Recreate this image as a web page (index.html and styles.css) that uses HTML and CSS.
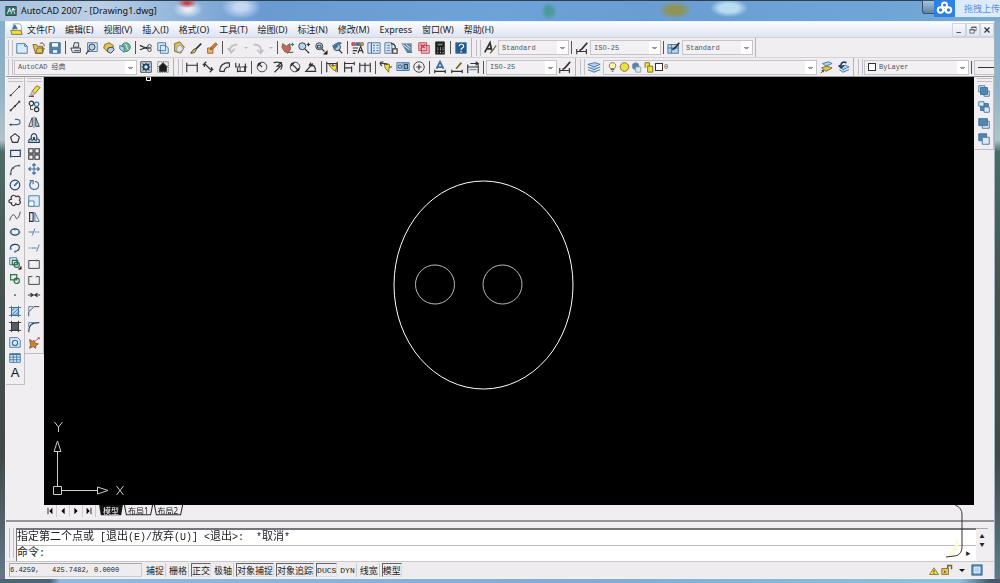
FILE: index.html
```html
<!DOCTYPE html>
<html lang="zh-CN">
<head>
<meta charset="utf-8">
<title>AutoCAD 2007 - [Drawing1.dwg]</title>
<link rel="stylesheet" href="styles.css">
</head>
<body>
<div class="window">
  <header class="titlebar">
    <svg class="ic" viewBox="0 0 16 16"><path class="f-teal" d="M1 2h14v12H1z"/><path class="s-white" d="M3 12l3-8 2 5M8 12l3-8 2 8M4 8h4M9 6h5"/></svg>
    <h1>AutoCAD 2007 - [Drawing1.dwg]</h1>
    <div class="glow"></div>
    <div class="upload">
      <button class="minimize" aria-label="最小化"></button>
      <svg class="cloud" viewBox="0 0 21 17"><circle cx="10.500" cy="5" r="2.500"/><circle cx="6.500" cy="10" r="2.700"/><circle cx="14.500" cy="10" r="2.700"/><path d="M8.500 8l4 4"/></svg>
      <a href="#">拖拽上传</a>
    </div>
  </header>
  <div class="client">
    <nav class="menubar">
      <svg class="ic" viewBox="0 0 16 16"><path class="f-white s-gray" d="M4 1h8l2 3v9H4z"/><path class="f-yellow s-brown" d="M1 9h12l2 5H2z"/><path class="f-blue s-blue" d="M3 7l3-5 3 5z"/></svg>
      <a href="#">文件(F)</a><a href="#">编辑(E)</a><a href="#">视图(V)</a><a href="#">插入(I)</a><a href="#">格式(O)</a><a href="#">工具(T)</a><a href="#">绘图(D)</a><a href="#">标注(N)</a><a href="#">修改(M)</a><a href="#">Express</a><a href="#">窗口(W)</a><a href="#">帮助(H)</a>
      <div class="mdi">
        <button aria-label="最小化文档"><svg class="ic" viewBox="0 0 16 16"><path class="bold" d="M4 12h7"/></svg></button>
        <button aria-label="还原文档"><svg class="ic" viewBox="0 0 16 16"><path d="M3 7h7v6H3zM3 8h7M6 6V3h7v6h-3M6 4h7"/></svg></button>
        <button aria-label="关闭文档"><svg class="ic" viewBox="0 0 16 16"><path class="heavy" d="M4 4l8 8M12 4l-8 8"/></svg></button>
      </div>
    </nav>

    <div class="toolrow">
      <div class="toolbar">
        <span class="grip"></span>
        <div class="group g3">
          <button aria-label="新建"><svg class="ic" viewBox="0 0 16 16"><path class="f-pale s-blue" d="M2 3h9l3 3v8H2zM11 3v3h3"/></svg></button>
          <button aria-label="打开"><svg class="ic" viewBox="0 0 16 16"><path class="f-gold s-brown" d="M1 4h4l1 2h6v8H4zM4 14l2-6h8l-2 6z"/><path d="M9 3c3-2 5 0 5 3"/></svg></button>
          <button aria-label="保存"><svg class="ic" viewBox="0 0 16 16"><path class="f-steel s-blue" d="M2 2h12v12H2z"/><path class="f-white s-blue" d="M4 2h8v5H4zM5 10h6v4H5z"/></svg></button>
        </div>
        <span class="sep"></span>
        <div class="group g4">
          <button aria-label="打印"><svg class="ic" viewBox="0 0 16 16"><path class="f-pale" d="M5 7l1-5h5v5zM2 8h11v5H4zM6 11h6"/></svg></button>
          <button aria-label="打印预览"><svg class="ic" viewBox="0 0 16 16"><path class="f-pale s-blue" d="M3 2h11v10H3z"/><circle class="f-sky" cx="8" cy="7" r="3.500"/><path class="bold" d="M5 10l-4 5"/></svg></button>
          <button aria-label="发布"><svg class="ic" viewBox="0 0 16 16"><path class="f-gold s-brown" d="M3 4l5-2 5 3-1 6-6 1-4-4z"/><path class="f-sky" d="M7 8l5-1 2 3-4 4-4-2z"/></svg></button>
          <button aria-label="三维 DWF"><svg class="ic" viewBox="0 0 16 16"><circle class="f-green s-teal" cx="9" cy="7" r="5"/><path class="f-sky s-blue" d="M2 5l5 2v6l-5-4z"/><path class="s-white" d="M8 3c3 2 1 5 4 7"/></svg></button>
        </div>
        <span class="sep"></span>
        <div class="group g5">
          <button aria-label="剪切"><svg class="ic" viewBox="0 0 16 16"><path class="bold" d="M1 5l9 4M1 10l9-3"/><circle cx="12" cy="6" r="2"/><circle cx="12" cy="10" r="2"/></svg></button>
          <button aria-label="复制"><svg class="ic" viewBox="0 0 16 16"><path class="f-pale s-blue" d="M2 2h9v9H2zM5 5h6l3 3v6H5z"/></svg></button>
          <button aria-label="粘贴"><svg class="ic" viewBox="0 0 16 16"><path class="f-gold s-brown" d="M3 3l6-2 5 6-4 7-7-2z"/><path class="f-pale s-gray" d="M6 6l4-1 3 4-4 4-4-2z"/></svg></button>
          <button aria-label="特性匹配"><svg class="ic" viewBox="0 0 16 16"><path class="heavy" d="M14 3L7 10"/><path class="f-gold" d="M7 9c-2 0-3 2-5 5 3 0 6-1 6-4"/></svg></button>
          <button aria-label="块编辑器"><svg class="ic" viewBox="0 0 16 16"><path class="f-gold s-red" d="M3 8h6v6H3z"/><path class="f-orange s-brown" d="M6 10l1-3 5-5 2 2-5 5z"/></svg></button>
        </div>
        <span class="sep"></span>
        <div class="group g-undo">
          <button aria-label="放弃"><svg class="ic dim" viewBox="0 0 16 16"><path class="heavy" d="M6 14C3 8 6 4 13 4M2 8l4 5 4-4"/></svg></button>
          <button class="drop" aria-label="放弃列表"></button>
          <button aria-label="重做"><svg class="ic dim" viewBox="0 0 16 16"><path class="heavy" d="M3 4c7 0 9 3 8 9M7 10l4 4 3-4"/></svg></button>
          <button class="drop" aria-label="重做列表"></button>
        </div>
        <span class="sep"></span>
        <div class="group g4">
          <button aria-label="实时平移"><svg class="ic" viewBox="0 0 16 16"><path class="f-red s-brown" d="M2 3l4 3 4-3 1 6-3 5-4-2-3-5z"/><path class="s-teal bold" d="M11 4h4M13 2v4M9 13h5"/></svg></button>
          <button aria-label="实时缩放"><svg class="ic" viewBox="0 0 16 16"><circle class="f-sky" cx="6" cy="6" r="4"/><path class="bold" d="M9 9l5 5M11 4h4M13 2v4"/></svg></button>
          <button aria-label="窗口缩放"><svg class="ic" viewBox="0 0 16 16"><circle class="f-sky" cx="6" cy="6" r="4"/><path class="bold" d="M9 9l3 3"/><path d="M4 5h4v3H4z"/><path class="f-black" d="M15 11v4h-4z"/></svg></button>
          <button aria-label="缩放上一个"><svg class="ic" viewBox="0 0 16 16"><circle class="f-sky" cx="8" cy="7" r="4"/><path class="bold" d="M10 10l4 4"/><path class="heavy s-blue" d="M13 3C9 1 7 3 6 7M3 5l3 3 3-3"/></svg></button>
        </div>
        <span class="sep"></span>
        <div class="group g6">
          <button aria-label="特性"><svg class="ic" viewBox="0 0 16 16"><path class="f-red s-red" d="M1 2h4v3H1z"/><path class="f-blue s-blue" d="M6 2h4v3H6z"/><path class="f-gold s-brown" d="M11 2h3v3h-3z"/><path class="bold" d="M2 8h6M2 11h5M2 14h3M8 14l3-8 3 8M9 11h4"/></svg></button>
          <button aria-label="设计中心"><svg class="ic" viewBox="0 0 16 16"><path class="f-pale s-blue" d="M1 2h14v12H1z"/><path class="bold s-blue" d="M5 2v12M7 5h2M11 5h2M7 8h2M11 8h2M7 11h2M11 11h2"/></svg></button>
          <button aria-label="工具选项板"><svg class="ic" viewBox="0 0 16 16"><path class="f-pale s-blue" d="M1 2h8v12H1z"/><path class="s-blue" d="M3 5h4M3 8h4M3 11h4"/><path class="bold" d="M8 3c4 0 5 2 5 5M10 9h5v5h-5z"/></svg></button>
          <button aria-label="图纸集"><svg class="ic" viewBox="0 0 16 16"><path class="f-steel s-gray" d="M2 3h11v10H8z"/><path class="s-white" d="M3 4l8 6M7 4l5 4"/><path class="s-teal" d="M8 13h6"/></svg></button>
          <button aria-label="标记集"><svg class="ic" viewBox="0 0 16 16"><path class="f-pink s-red" d="M2 2h9v9H2zM5 5h9v9H5z"/><path class="s-red bold" d="M4 4l5 4M9 4L4 9"/></svg></button>
          <button aria-label="计算器"><svg class="ic" viewBox="0 0 16 16"><path class="f-black" d="M3 1h10v14H3z"/><path class="f-green" d="M5 3h6v2H5z"/><path class="s-white" d="M5 8h1M8 8h1M11 8h1M5 10h1M8 10h1M11 10h1M5 13h1M8 13h1M11 13h1"/></svg></button>
        </div>
        <span class="sep"></span>
        <button aria-label="帮助"><svg class="ic" viewBox="0 0 16 16"><path class="f-help s-blue" d="M2 2h12v12H2z"/><path class="s-white bold" d="M6 6c0-3 5-3 5 0 0 2-3 2-3 4M8 11v2"/></svg></button>
      </div>
      <div class="toolbar styles">
        <span class="grip"></span>
        <button aria-label="文字样式"><svg class="ic" viewBox="0 0 16 16"><path class="heavy" d="M2 13L8 2l2 9M4 9h6"/><path class="bold s-brown" d="M15 5l-4 6-3 3"/></svg></button>
        <label class="combo"><select aria-label="文字样式"><option>Standard</option></select></label>
        <span class="sep"></span>
        <button aria-label="标注样式"><svg class="ic" viewBox="0 0 16 16"><path class="bold" d="M2 9v6M13 9v6M2 12h11"/><path class="heavy" d="M14 2L8 9l-3 2"/></svg></button>
        <label class="combo"><select aria-label="标注样式"><option>ISO-25</option></select></label>
        <span class="sep"></span>
        <button aria-label="表格样式"><svg class="ic" viewBox="0 0 16 16"><path class="f-sky s-blue" d="M1 4h12v10H1zM1 8h12M5 4v10"/><path class="heavy" d="M14 2L9 8l-3 2"/></svg></button>
        <label class="combo"><select aria-label="表格样式"><option>Standard</option></select></label>
      </div>
    </div>

    <div class="toolrow second">
      <div class="toolbar">
        <span class="grip"></span>
        <label class="combo wide"><select aria-label="工作空间"><option>AutoCAD 经典</option></select></label>
        <div class="group g2">
          <button aria-label="工作空间设置"><svg class="ic" viewBox="0 0 16 16"><path class="f-pale" d="M2 2h12v12H2z"/><circle class="heavy s-navy" cx="8" cy="8" r="3"/><path class="s-navy bold" d="M8 3v2M8 11v2M3 8h2M11 8h2M4 4l2 2M10 10l2 2M12 4l-2 2M6 10l-2 2"/></svg></button>
          <button aria-label="我的工作空间"><svg class="ic" viewBox="0 0 16 16"><path class="dashed" d="M2 2h12v12H2z"/><path class="f-black" d="M3 8l5-5 5 5h-1v5H4V8z"/></svg></button>
        </div>
      </div>
      <div class="toolbar dims">
        <span class="grip"></span>
        <div class="group g4">
          <button aria-label="线性标注"><svg class="ic" viewBox="0 0 16 16"><path class="bold" d="M2 3v11M14 3v11M2 6h12"/></svg></button>
          <button aria-label="对齐标注"><svg class="ic" viewBox="0 0 16 16"><path class="bold" d="M2 6l4-4M10 14l4-4M4 4l8 8M4 4v4M12 12V8"/></svg></button>
          <button aria-label="弧长标注"><svg class="ic" viewBox="0 0 16 16"><path class="bold" d="M2 13C2 6 6 3 13 3M7 14c0-4 2-6 6-6M2 13h5M13 3v5"/></svg></button>
          <button aria-label="坐标标注"><svg class="ic" viewBox="0 0 16 16"><path class="bold" d="M2 3v5h4V4M4 14V9M4 13h9V4M10 8h5"/><path class="f-white" d="M7 8h5v5H7z"/></svg></button>
        </div>
        <span class="sep"></span>
        <div class="group g4">
          <button aria-label="半径标注"><svg class="ic" viewBox="0 0 16 16"><circle cx="8" cy="8" r="5.500"/><path class="bold" d="M8 8L4 4M4 7V4h3"/></svg></button>
          <button aria-label="折弯标注"><svg class="ic" viewBox="0 0 16 16"><path class="bold" d="M3 3c8-2 12 2 8 8M12 3L7 7h4l-7 7M8 3h4v4"/></svg></button>
          <button aria-label="直径标注"><svg class="ic" viewBox="0 0 16 16"><circle cx="8" cy="8" r="5.500"/><path class="bold" d="M4 4l8 8M4 7V4h3M12 9v3H9"/></svg></button>
          <button aria-label="角度标注"><svg class="ic" viewBox="0 0 16 16"><path class="bold" d="M14 13H2l8-9M7 5c4 0 6 3 6 7M8 3l-2 3 4 1"/></svg></button>
        </div>
        <span class="sep"></span>
        <div class="group g3">
          <button aria-label="快速标注"><svg class="ic" viewBox="0 0 16 16"><path class="f-yellow s-brown" d="M4 4l5 3 5-2-2 8-6-5z"/><path class="bold" d="M2 2v12M14 2v12M2 4h12M9 4v3"/></svg></button>
          <button aria-label="基线标注"><svg class="ic" viewBox="0 0 16 16"><path class="bold" d="M3 2v12M3 4h11M14 2v4M3 9h8M11 7v7"/></svg></button>
          <button aria-label="连续标注"><svg class="ic" viewBox="0 0 16 16"><path class="bold" d="M2 3v11M8 3v11M14 3v11M2 6h12"/></svg></button>
        </div>
        <span class="sep"></span>
        <div class="group g3">
          <button aria-label="快速引线"><svg class="ic" viewBox="0 0 16 16"><path class="f-yellow s-brown" d="M6 4l6 1-1 9-4-5z"/><path class="bold" d="M1 3l9 2M1 3l2 4M1 3l4-1M12 8h3"/></svg></button>
          <button aria-label="公差"><svg class="ic" viewBox="0 0 16 16"><path class="f-sky s-blue" d="M1 3h14v9H1zM8 3v9"/><circle class="s-navy" cx="4.500" cy="7.500" r="2"/><path class="s-navy bold" d="M10 5h3v5h-3z"/></svg></button>
          <button aria-label="圆心标记"><svg class="ic" viewBox="0 0 16 16"><circle cx="8" cy="8" r="6"/><path class="bold" d="M8 5v6M5 8h6"/></svg></button>
        </div>
        <span class="sep"></span>
        <div class="group g3">
          <button aria-label="编辑标注"><svg class="ic" viewBox="0 0 16 16"><path class="heavy s-blue" d="M4 10l4-8 4 8M5 8h6"/><path class="bold" d="M2 11v4M14 11v4M2 13h12"/></svg></button>
          <button aria-label="编辑标注文字"><svg class="ic" viewBox="0 0 16 16"><path class="heavy s-brown" d="M13 3l-6 7"/><path class="bold" d="M2 11v4M14 11v4M2 13h12"/></svg></button>
          <button aria-label="标注更新"><svg class="ic" viewBox="0 0 16 16"><path class="bold" d="M2 5v10M14 5v10M2 8h12M5 4h8M11 2l3 2-3 2"/><path class="s-blue" d="M4 11h8"/></svg></button>
        </div>
        <span class="sep"></span>
        <label class="combo"><select aria-label="当前标注样式"><option>ISO-25</option></select></label>
        <button aria-label="管理标注样式"><svg class="ic" viewBox="0 0 16 16"><path class="bold" d="M2 9v6M13 9v6M2 12h11"/><path class="heavy" d="M14 2L8 9l-3 2"/></svg></button>
      </div>
      <div class="toolbar layers">
        <span class="grip"></span>
        <button aria-label="图层特性"><svg class="ic" viewBox="0 0 16 16"><path class="f-sky s-blue" d="M1 5l8-2 6 2-7 3zM1 8l7 3 7-3M1 11l7 3 7-3"/></svg></button>
        <label class="combo layer">
          <svg class="mini" viewBox="0 0 10 14"><path class="f-cream s-brown" d="M3 9C0 6 1 2 5 2s5 4 2 7z"/><path d="M3 10h4M4 12h2"/></svg>
          <svg class="mini" viewBox="0 0 12 14"><circle class="f-yellow s-brown" cx="6" cy="7" r="5"/></svg>
          <svg class="mini" viewBox="0 0 12 14"><circle class="f-steel s-gray" cx="5" cy="6" r="4"/><path class="f-pale s-gray" d="M5 7h6v6H5z"/></svg>
          <svg class="mini" viewBox="0 0 12 14"><path class="f-yellow s-brown" d="M5 6h6v7H5zM2 8V2h5v4"/></svg>
          <span class="swatch"></span>
          <select aria-label="图层"><option>0</option></select>
        </label>
        <div class="group g2">
          <button aria-label="置为当前图层"><svg class="ic" viewBox="0 0 16 16"><path class="f-sky s-blue" d="M4 4l7-2 4 2-7 3z"/><path class="f-gold s-brown" d="M3 9l6-2 6 2-7 4z"/><path d="M2 15l3-3M3 12h2v2"/></svg></button>
          <button aria-label="上一个图层"><svg class="ic" viewBox="0 0 16 16"><path class="f-sky s-blue" d="M4 8l7-2 4 2-7 3zM4 11l4 3 7-3"/><path class="heavy s-navy" d="M12 3C6 1 5 5 6 9M3 6l3 3 3-3"/></svg></button>
        </div>
      </div>
      <div class="toolbar props">
        <span class="grip"></span>
        <label class="combo color"><span class="swatch"></span><select aria-label="颜色"><option>ByLayer</option></select></label>
        <span class="sep"></span>
        <div class="linetype"></div>
      </div>
    </div>

    <main class="workspace">
      <div class="palette draw">
        <span class="grip-h"></span>
        <div class="stack">
          <button aria-label="直线"><svg class="ic" viewBox="0 0 16 16"><path d="M3 13L13 3"/><path class="heavy" d="M2 13h2M12 3h2"/></svg></button>
          <button aria-label="构造线"><svg class="ic" viewBox="0 0 16 16"><path class="bold" d="M3 13L13 3"/><path class="heavy" d="M2 13h2M12 3h2M7 8h2"/></svg></button>
          <button aria-label="多段线"><svg class="ic" viewBox="0 0 16 16"><path class="bold s-blue" d="M2 11h8c5 0 5-6 0-6H8"/><path class="heavy" d="M2 11h2"/></svg></button>
          <button aria-label="正多边形"><svg class="ic" viewBox="0 0 16 16"><path class="bold" d="M8 3l5 4-2 6H5L3 7z"/></svg></button>
          <button aria-label="矩形"><svg class="ic" viewBox="0 0 16 16"><path class="bold s-navy" d="M3 5h11v7H3z"/><path class="heavy s-blue" d="M2 12h2M13 5h2"/></svg></button>
          <button aria-label="圆弧"><svg class="ic" viewBox="0 0 16 16"><path class="bold" d="M3 14c0-6 3-10 10-10"/><path class="heavy s-blue" d="M2 14h2M5 7h2M12 4h2"/></svg></button>
          <button aria-label="圆"><svg class="ic" viewBox="0 0 16 16"><circle class="bold s-navy" cx="8" cy="8" r="5.500"/><path class="heavy s-blue" d="M7 9l4-4"/></svg></button>
          <button aria-label="修订云线"><svg class="ic" viewBox="0 0 16 16"><path class="bold" d="M4 6c-2-4 3-6 5-3 4-2 6 2 4 4 3 3-1 7-4 4-1 4-6 2-5-1-4 1-4-4 0-4z"/></svg></button>
          <button aria-label="样条曲线"><svg class="ic" viewBox="0 0 16 16"><path d="M2 13C5 3 8 7 9 10s4-1 5-7"/></svg></button>
          <button aria-label="椭圆"><svg class="ic" viewBox="0 0 16 16"><ellipse class="bold s-navy" cx="8" cy="8" rx="5" ry="3.500"/><path class="heavy s-blue" d="M2 8h2M12 8h2M7 5h2"/></svg></button>
          <button aria-label="椭圆弧"><svg class="ic" viewBox="0 0 16 16"><path class="bold s-navy" d="M3 9c-2-6 10-7 10-2 0 4-4 5-5 5"/><path class="heavy s-blue" d="M2 9h2M7 12h2"/></svg></button>
          <button aria-label="插入块"><svg class="ic" viewBox="0 0 16 16"><path class="f-pale s-blue" d="M2 2h8v8H2z"/><path class="bold s-green" d="M5 5h6v5H5z"/><circle class="bold s-green" cx="10" cy="10" r="3"/><path class="f-black" d="M15 12v3h-3z"/></svg></button>
          <button aria-label="创建块"><svg class="ic" viewBox="0 0 16 16"><path class="bold s-green" d="M3 3h7v6H3z"/><circle class="bold s-green" cx="10" cy="10" r="3"/></svg></button>
          <button aria-label="点"><svg class="ic" viewBox="0 0 16 16"><path class="heavy s-teal" d="M7 8h2"/></svg></button>
          <button aria-label="图案填充"><svg class="ic" viewBox="0 0 16 16"><path class="f-sky" d="M4 4h8v9H4z"/><path class="s-blue" d="M4 13l9-9M4 8l4-4M8 13l5-5M4 2v13M12 2v13M1 4h14M1 13h14"/></svg></button>
          <button aria-label="渐变色"><svg class="ic" viewBox="0 0 16 16"><path class="f-dark" d="M4 4h8v9H4z"/><path d="M4 2v13M12 2v13M1 4h14M1 13h14"/></svg></button>
          <button aria-label="面域"><svg class="ic" viewBox="0 0 16 16"><path class="f-pale s-blue" d="M2 3h9l3 3v8H2z"/><circle class="bold s-blue" cx="8" cy="9" r="3"/></svg></button>
          <button aria-label="表格"><svg class="ic" viewBox="0 0 16 16"><path class="f-pale s-blue" d="M2 3h12v10H2zM2 7h12M2 10h12M6 3v10M10 3v10"/><path class="bold s-blue" d="M2 4h12"/></svg></button>
          <button class="letter" aria-label="多行文字">A</button>
        </div>
      </div>
      <div class="palette modify">
        <span class="grip-h"></span>
        <div class="stack">
          <button aria-label="删除"><svg class="ic" viewBox="0 0 16 16"><path class="f-yellow s-brown" d="M6 8l5-6 4 2-6 7z"/><path class="f-pink s-gray" d="M6 8l3 3-2 2-3-1z"/><path class="bold" d="M2 14h6"/></svg></button>
          <button aria-label="复制对象"><svg class="ic" viewBox="0 0 16 16"><circle class="bold" cx="5" cy="5" r="2.500"/><circle class="bold s-blue" cx="11" cy="6" r="2.500"/><circle class="bold" cx="11" cy="12" r="2.500"/><path d="M4 8v4h3"/></svg></button>
          <button aria-label="镜像"><svg class="ic" viewBox="0 0 16 16"><path d="M6 3v10H2z"/><path class="f-sky" d="M10 3v10h4z"/><path class="s-blue" d="M8 2v13"/></svg></button>
          <button aria-label="偏移"><svg class="ic" viewBox="0 0 16 16"><path class="bold s-navy" d="M2 13h12c1-4-2-4-3-4 2-8-8-8-6 0-3 0-3 2-3 4zM5 11c3-1 3-2 2-4M11 11c-3-1-3-2-2-4"/></svg></button>
          <button aria-label="阵列"><svg class="ic" viewBox="0 0 16 16"><path class="bold" d="M2 2h5v5H2zM9 2h5v5H9zM2 9h5v5H2zM9 9h5v5H9z"/></svg></button>
          <button aria-label="移动"><svg class="ic" viewBox="0 0 16 16"><path class="bold s-blue" d="M8 2v12M2 8h12M6 4l2-2 2 2M6 12l2 2 2-2M4 6L2 8l2 2M12 6l2 2-2 2"/></svg></button>
          <button aria-label="旋转"><svg class="ic" viewBox="0 0 16 16"><path class="bold s-blue" d="M5 4C1 8 4 13 8 13c7 0 7-9 1-9M3 3h4v4"/></svg></button>
          <button aria-label="缩放"><svg class="ic" viewBox="0 0 16 16"><path class="f-pale s-blue" d="M2 2h12v12H2z"/><path class="f-white s-blue" d="M2 8h6v6H2z"/></svg></button>
          <button aria-label="拉伸"><svg class="ic" viewBox="0 0 16 16"><path class="bold" d="M3 3h4v10H3z"/><path class="s-blue" d="M9 3l5 10H9z"/></svg></button>
          <button aria-label="修剪"><svg class="ic" viewBox="0 0 16 16"><path class="s-blue" d="M2 8h5M6 12l3-8M9 8h2M12 8h2"/></svg></button>
          <button aria-label="延伸"><svg class="ic" viewBox="0 0 16 16"><path class="s-blue" d="M2 8h2M5 8h6M11 12l3-8"/></svg></button>
          <button aria-label="打断于点"><svg class="ic" viewBox="0 0 16 16"><path d="M2 4h12v9H2z"/><path class="heavy s-blue" d="M10 4h2"/></svg></button>
          <button aria-label="打断"><svg class="ic" viewBox="0 0 16 16"><path d="M5 4H2v9h12V4h-3"/><path class="heavy s-blue" d="M5 4h1M10 4h1"/></svg></button>
          <button aria-label="合并"><svg class="ic" viewBox="0 0 16 16"><path class="bold" d="M1 8h14M4 6l3 2-3 2M12 6L9 8l3 2"/></svg></button>
          <button aria-label="倒角"><svg class="ic" viewBox="0 0 16 16"><path d="M2 14V9l6-6h6"/><path class="s-blue" d="M2 8V3h5"/></svg></button>
          <button aria-label="圆角"><svg class="ic" viewBox="0 0 16 16"><path class="bold s-navy" d="M2 14c0-8 3-11 12-11"/><path class="s-blue" d="M2 8V3h6"/></svg></button>
          <button aria-label="分解"><svg class="ic" viewBox="0 0 16 16"><path class="f-orange s-brown" d="M3 4l3 2 2-1 1 3 4 1-3 2v3l-3-2-4 2 1-4z"/><path class="s-red" d="M9 6l5-4M12 2h2v2"/></svg></button>
        </div>
      </div>
      <section class="viewport">
        <div class="canvas">
          <svg class="drawing" viewBox="0 0 930 428" preserveAspectRatio="xMidYMid meet">
            <ellipse cx="439.500" cy="208" rx="89.500" ry="104"/>
            <circle class="thin" cx="391" cy="207.500" r="19.500"/>
            <circle class="thin" cx="458.500" cy="207.500" r="19.500"/>
            <path d="M102.500 0v3.500h4V0z"/>
          </svg>
          <svg class="ucs" viewBox="0 0 90 84"><path d="M9.500 73.500h8v-8h-8zM13.500 65V31M18 69.500h35M10 30.500h7L13.500 20zM53.500 66v7L64 69.500zM10.500 1l4 5 4-5M14.500 6v5M72.500 65l7 9M79.500 65l-7 9"/></svg>
        </div>
        <div class="tabs">
          <div class="arrows">
            <button aria-label="第一个"><svg viewBox="0 0 10 10"><path d="M8 1v8L4 5zM2 1h1v8H2z"/></svg></button>
            <button aria-label="上一个"><svg viewBox="0 0 10 10"><path d="M7 1v8L3 5z"/></svg></button>
            <button aria-label="下一个"><svg viewBox="0 0 10 10"><path d="M3 1v8l4-4z"/></svg></button>
            <button aria-label="最后一个"><svg viewBox="0 0 10 10"><path d="M2 1v8l4-4zM7 1h1v8H7z"/></svg></button>
          </div>
          <button class="tab active">模型</button><button class="tab">布局1</button><button class="tab">布局2</button>
        </div>
      </section>
      <div class="palette order">
        <span class="grip-h"></span>
        <div class="stack">
          <button aria-label="前置"><svg class="ic" viewBox="0 0 16 16"><path class="f-pale s-blue" d="M2 2h7v7H2zM8 8h6v6H8z"/><path class="f-steel s-blue" d="M4 4h8v8H4z"/></svg></button>
          <button aria-label="后置"><svg class="ic" viewBox="0 0 16 16"><path class="f-steel s-blue" d="M4 4h9v8H4z"/><path class="f-pale s-blue" d="M2 2h6v5H2zM8 8h6v6H8z"/></svg></button>
          <button aria-label="置于对象之上"><svg class="ic" viewBox="0 0 16 16"><path class="f-pale s-blue" d="M6 6h8v8H6z"/><path class="f-steel s-blue" d="M2 3h10v8H2z"/></svg></button>
          <button aria-label="置于对象之下"><svg class="ic" viewBox="0 0 16 16"><path class="f-steel s-blue" d="M2 2h9v8H2z"/><path class="f-pale s-blue" d="M6 6h8v8H6z"/></svg></button>
        </div>
      </div>
    </main>

    <section class="command">
      <span class="grip"></span>
      <div class="console">
        <p class="history">指定第二个点或<span class="code"> [</span>退出<span class="code">(E)/</span>放弃<span class="code">(U)] &lt;</span>退出<span class="code">&gt;:  *</span>取消<span class="code">*</span></p>
        <div class="prompt"><label for="cmd">命令<span class="code">:</span></label><input id="cmd" type="text"></div>
      </div>
      <div class="scroll">
        <button aria-label="向上滚动">▲</button><button aria-label="向下滚动">▼</button><button class="right" aria-label="向右滚动">▶</button>
      </div>
      <svg class="curl" viewBox="0 0 24 56"><path class="shade" d="M16 40c0 8-6 12-12 12 4-4 8-8 10-18z"/><path d="M12 1c5 2 7 5 7 10v32c0 6-4 9-8 9l-8 1"/></svg>
    </section>

    <footer class="status">
      <output class="coords">6.4259,   425.7482, 0.0000</output>
      <button>捕捉</button><button>栅格</button><button class="on">正交</button><button>极轴</button><button class="on">对象捕捉</button><button class="on">对象追踪</button><button class="on code">DUCS</button><button class="code">DYN</button><button>线宽</button><button class="on">模型</button>
      <div class="tray">
        <svg class="ic" viewBox="0 0 16 16"><path class="f-yellow s-brown" d="M8 5l6 9H2z"/><path class="bold" d="M8 8v3M8 12v1"/></svg>
        <button aria-label="锁定"><svg class="ic" viewBox="0 0 16 16"><path class="f-gold s-brown" d="M1 6h9v8H1z"/><path class="heavy s-brown" d="M9 6V2h5v5M5 9v3"/></svg></button>
        <button class="menu" aria-label="状态栏菜单"></button>
        <button aria-label="全屏显示"><svg class="ic" viewBox="0 0 16 16"><path class="f-steel s-blue" d="M1 1h14v14H1z"/><path class="f-sky s-white" d="M4 4h8v8H4z"/></svg></button>
      </div>
    </footer>
  </div>
</div>
</body>
</html>
```
FILE: styles.css
```css
* { box-sizing: border-box; }
body { margin: 0; font-family: "Noto Sans", "Noto Sans CJK SC", sans-serif; font-size: 8px; color: #222; }
button { border: 0; padding: 0; margin: 0; background: none; font: inherit; color: inherit; display: flex; align-items: center; justify-content: center; }
a { color: inherit; text-decoration: none; }

.window {
  height: 100vh; min-height: 480px; padding: 0 5px 4px; display: flex; flex-direction: column; overflow: hidden;
  background:
    linear-gradient(90deg, #4b6478 5%, #8fb9e2 6%, #7fabd6 60%, #8ec3dc 96%, #44586a 99%) bottom / 100% 4px no-repeat,
    linear-gradient(#86acd0, #93b2c4 15%, #b4c3ca 24%, #4e6b66 26%, #46524f 50%, #3f4a48 78%, #66798a);
}
.titlebar {
  position: relative; flex: none; height: 21px; margin: 0 -5px; padding: 0 0 0 5px; display: flex; align-items: center; gap: 4px;
  border-top: 1px solid #2d4050;
  background: linear-gradient(90deg, #a9c3df, #bccfe5 10%, #96b8dc 17%, #6b9ad2 26%, #6da3d9 50%, #6a9dd4 64%, #6fa6d6 90%, #7da9cd);
}
.titlebar h1 { margin: 0; font-size: 9px; font-weight: 400; line-height: 18px; color: #111; white-space: nowrap; z-index: 1; }
.titlebar .ic { width: 12px; height: 12px; z-index: 1; }
.glow {
  position: absolute; inset: 0;
  background:
    radial-gradient(ellipse 10px 5px at 187px 2px, #c8414a 20%, transparent),
    radial-gradient(ellipse 15px 9px at 188px 8px, #e5eaf4 20%, transparent),
    radial-gradient(ellipse 20px 12px at 241px 6px, #c5d8f2 30%, transparent),
    radial-gradient(ellipse 8px 9px at 549px 10px, #4a9a98 40%, transparent),
    radial-gradient(ellipse 17px 9px at 675px 9px, #8f9455 40%, transparent),
    radial-gradient(ellipse 19px 9px at 729px 7px, #b8dcf0 50%, transparent);
}
.upload { position: absolute; right: 0; top: -1px; height: 17px; display: flex; color: #5d92d8; font-size: 9px; line-height: 17px; }
.upload a { width: 45px; padding-left: 9px; overflow: hidden; white-space: nowrap; background: #dcebfb; }
.cloud { width: 21px; height: 17px; background: #2f80e6; fill: none; stroke: #fff; stroke-width: 2; }
.minimize { width: 12px; height: 14px; border: 1px solid #35536f; border-right: 0; border-radius: 0 0 0 3px; background: linear-gradient(#a9c2da, #5d84aa); }

.client { flex: 1; min-height: 0; display: flex; flex-direction: column; background: #f0eef1; border: 1px solid #eef3f8; border-right-color: #9fb4c4; }
.menubar { flex: none; height: 15px; display: flex; align-items: center; gap: 10px; padding-left: 4px; background: linear-gradient(#fbfcff, #dfe4f3); font-size: 9px; line-height: 14px; }
.menubar .ic { width: 13px; height: 13px; margin-right: -6px; }
.mdi { margin-left: auto; display: flex; }
.mdi button { width: 14px; height: 14px; border: 1px solid #ccd5e2; }
.mdi .ic { width: 10px; height: 10px; margin: 0; }

.ic, .mini { width: 16px; height: 16px; flex: none; fill: none; stroke: #333; stroke-width: 1; overflow: visible; }
.toolrow .ic { width: 14px; height: 14px; }
.bold { stroke-width: 1.3; }
.heavy { stroke-width: 2; }
.dashed { stroke-dasharray: 1 1; }
.dim { opacity: .25; }
.f-white { fill: #fff; } .f-pale { fill: #dceaf8; } .f-sky { fill: #b3d3ee; } .f-steel { fill: #5684aa; }
.f-blue { fill: #3c6caa; } .f-help { fill: #225a8c; } .f-teal { fill: #2b756f; } .f-green { fill: #70b294; }
.f-yellow { fill: #f0e13a; } .f-cream { fill: #faf6b0; } .f-gold { fill: #dfc458; } .f-orange { fill: #d97b3a; } .f-red { fill: #c9606b; }
.f-pink { fill: #f3b9bf; } .f-black { fill: #1b1b1b; } .f-dark { fill: #555d66; }
.s-white { stroke: #fff; } .s-blue { stroke: #3d72a0; } .s-navy { stroke: #20415f; } .s-teal { stroke: #2c7d7b; }
.s-green { stroke: #2b7047; } .s-brown { stroke: #74642a; } .s-red { stroke: #ba4050; } .s-gray { stroke: #8b99a6; }

.toolrow { flex: none; height: 20px; display: flex; overflow: hidden; border-top: 1px solid #d4d2d6; }
.toolrow.second { border-bottom: 1px solid #999; }
.toolbar { display: flex; align-items: center; padding: 0 2px; border-right: 1px solid #b5b3b8; }
.toolbar button { width: 16px; height: 16px; flex: none; }
.grip { flex: none; width: 5px; height: 16px; margin-right: 1px; border: 1px solid #c3c1c6; border-width: 0 1px; }
.sep { flex: none; width: 1px; height: 13px; margin: 0 2px; background: #555; }
.group { display: flex; justify-content: space-between; flex: none; }
.g2 { width: 33px; } .g3 { width: 49px; } .g4 { width: 65px; } .g5 { width: 82px; } .g6 { width: 98px; } .g-undo { width: 50px; }
.toolbar .drop { width: 8px; }
.drop::after { content: ""; border: 2px solid transparent; border-top-color: #bbb; border-bottom: 0; }
.combo { position: relative; display: flex; align-items: center; flex: none; width: 71px; height: 15px; padding-left: 3px; border: 1px solid #c6c4c9; background: #f2f0f3; }
.combo select { flex: 1; min-width: 0; height: 13px; padding: 0; border: 0; appearance: none; background: none; font-family: "Liberation Mono", "Noto Sans CJK SC", monospace; font-size: 7px; color: #555; }
.combo::after { content: ""; width: 11px; height: 13px; flex: none; background: linear-gradient(#999, #999) center / 5px 1px no-repeat, linear-gradient(#999, #999) 4px 7px / 3px 1px no-repeat, #fff; }
.combo.wide { width: 123px; margin-right: 1px; }
.combo.layer { width: 214px; margin: 0 1px; gap: 1px; }
.combo.color { width: 105px; gap: 3px; }
.mini { width: 11px; height: 12px; }
.toolbar.styles, .toolbar.dims, .toolbar.layers, .toolbar.props { padding-left: 4px; }
.toolbar.props { flex: 1; min-width: 0; padding-right: 0; border-right: 0; }
.swatch { width: 8px; height: 8px; flex: none; border: 1px solid #333; background: #fff; }
.linetype { flex: 1; height: 15px; border: 1px solid #c6c4c9; border-right: 0; background: linear-gradient(#333, #333) 3px center / 100% 1px no-repeat; }

.workspace { flex: 1; min-height: 0; display: flex; }
.palette { flex: none; align-self: flex-start; width: 19px; padding: 1px 1px 3px; display: flex; flex-direction: column; align-items: center; border: 1px solid #c0bec3; border-width: 0 1px 1px 0; }
.grip-h { width: 15px; height: 4px; margin-bottom: 1px; border: 1px solid #c3c1c6; border-width: 1px 0; }
.stack { display: flex; flex-direction: column; justify-content: space-between; }
.stack button { width: 16px; height: 15px; }
.stack .ic { width: 14px; height: 14px; }
.draw .stack { height: 298px; }
.modify .stack { height: 267px; }
.order .stack { height: 63px; }
.stack .letter { font-size: 13px; line-height: 14px; font-family: "Liberation Sans", sans-serif; color: #111; }
.viewport { flex: 1; min-width: 0; display: flex; flex-direction: column; }
.canvas { position: relative; flex: 1; min-height: 0; background: #000; overflow: hidden; }
.drawing { display: block; width: 100%; height: 100%; fill: none; stroke: #fff; stroke-width: 1; }
.drawing .thin { stroke: #bbb; }
.ucs { position: absolute; left: 0; bottom: 0; width: 90px; height: 84px; fill: none; stroke: #ccc; }
.tabs { flex: none; height: 12px; display: flex; line-height: 12px; font-size: 8px; }
.arrows { display: flex; margin-right: 2px; }
.arrows button { width: 13px; border-right: 1px solid #ccc; }
.arrows svg { width: 8px; height: 8px; }
.tab { position: relative; padding: 0 5px; margin-right: -1px; height: 11px; z-index: 0; }
.tab::before { content: ""; position: absolute; inset: 0 2px; z-index: -1; border: 1px solid #222; border-top: 0; transform: perspective(30px) rotateX(-25deg); }
.tab.active { color: #fff; }
.tab.active::before { background: #111; }
.order { border-left: 0; width: 20px; padding-left: 2px; }

.command { position: relative; flex: none; display: flex; margin-top: 3px; padding: 6px 6px 0 3px; border-top: 2px solid #96949a; }
.command .grip { height: 30px; margin-right: 2px; }
.console { flex: 1; min-width: 0; border: 1px solid #77757b; border-width: 2px 0 0 1px; background: #fff; font-family: "Liberation Mono", "Noto Sans CJK SC", monospace; font-size: 11px; line-height: 14px; }
.history { margin: 0; height: 16px; border-bottom: 1px solid #bbb; white-space: pre; overflow: hidden; }
.console .code { font-size: 10px; }
.prompt { display: flex; height: 15px; }
.prompt input { flex: 1; min-width: 0; border: 0; padding: 0; background: none; outline: 0; font: inherit; }
.scroll { flex: none; width: 12px; height: 33px; padding-top: 2px; position: relative; display: flex; flex-direction: column; border-top: 1px solid #aaa; }
.scroll button { height: 8px; font-size: 5px; }
.scroll .right { position: absolute; left: -14px; bottom: 3px; width: 12px; height: 12px; }
.curl { position: absolute; right: 27px; top: -18px; width: 24px; height: 56px; fill: none; stroke: #333; }
.curl .shade { fill: #fdfadb; stroke: none; }

.status { flex: none; height: 17px; display: flex; align-items: center; gap: 2px; padding-left: 3px; background: #eeecee; border-top: 1px solid #c9c7cb; font-size: 9px; line-height: 13px; }
.coords { width: 133px; height: 14px; margin-right: 1px; border: 1px solid #aaa; border-right-color: #ccc; border-bottom-color: #ccc; font-family: "Liberation Mono", monospace; font-size: 7px; white-space: pre; }
.status > button { height: 14px; padding: 0 1px; border-right: 1px solid #ccc; white-space: nowrap; flex: none; }
.status > .on { border: 1px solid #666; border-right-color: #ddd; border-bottom-color: #ddd; padding: 0; }
.status > .code { font-family: "Liberation Mono", monospace; font-size: 8px; }
.tray { margin-left: auto; display: flex; align-items: center; gap: 1px; padding-right: 11px; }
.tray .ic { width: 12px; height: 12px; }
.tray .menu { width: 16px; }
.menu::after { content: ""; border: 3px solid transparent; border-top-color: #111; border-bottom: 0; }
```
